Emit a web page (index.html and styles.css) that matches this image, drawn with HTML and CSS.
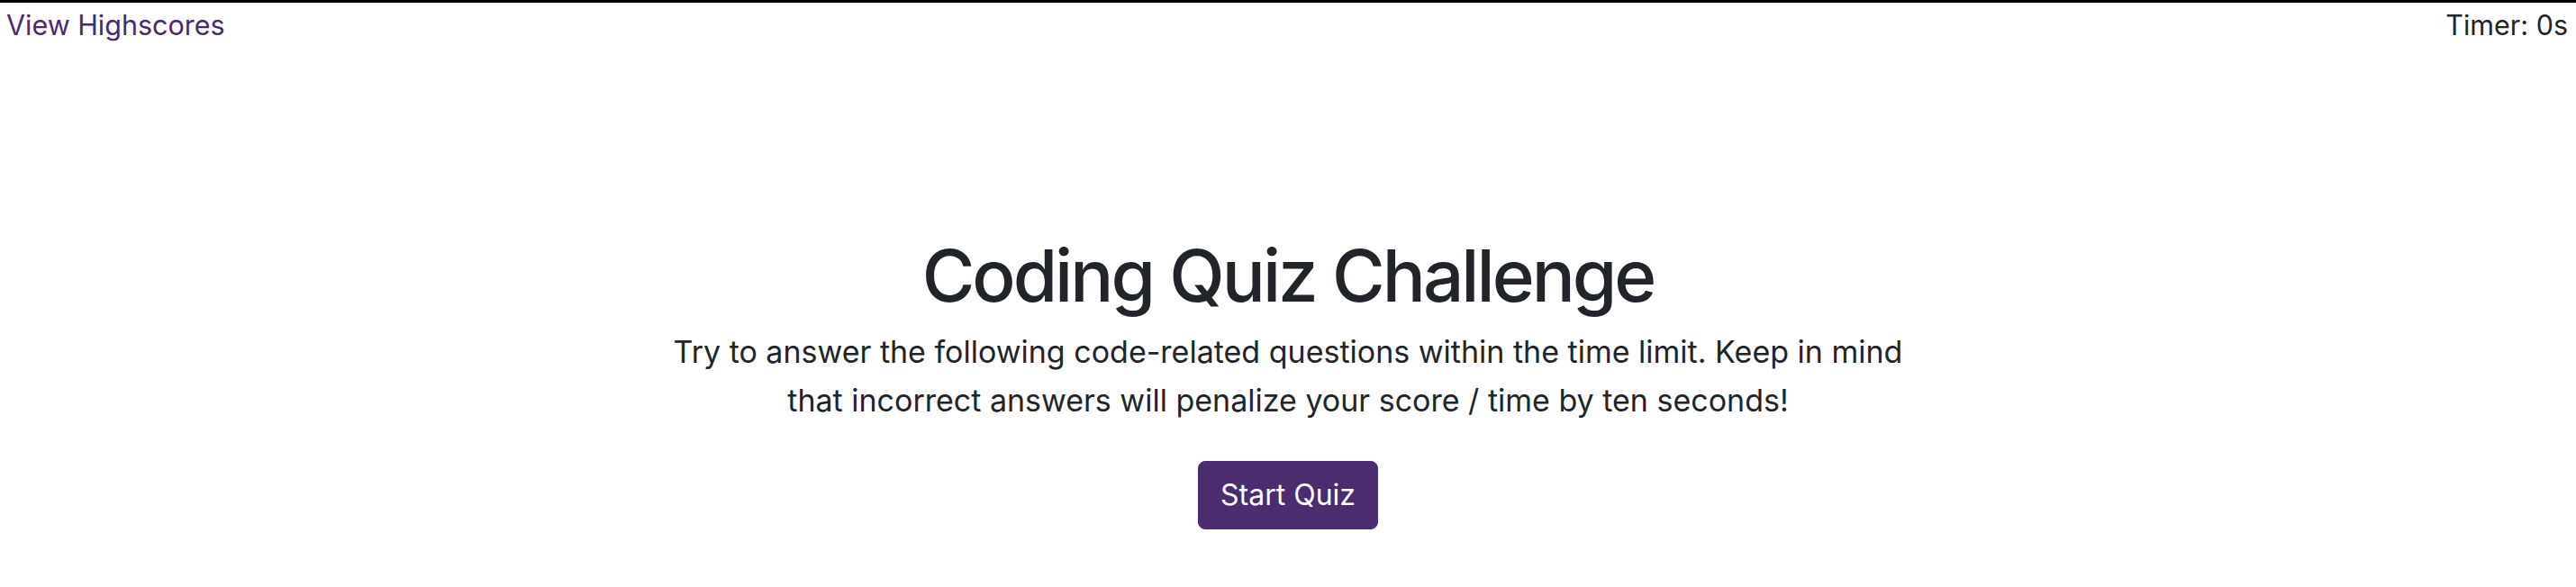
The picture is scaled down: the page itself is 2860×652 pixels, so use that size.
FILE: index.html
```html
<!DOCTYPE html>
<html lang="en">
<head>
<meta charset="utf-8">
<title>Coding Quiz Challenge</title>
<link rel="stylesheet" href="styles.css">
</head>
<body>
<header class="topbar">
  <a class="highscores-link" href="#">View Highscores</a>
  <div class="timer">Timer: <span class="timer-value">0</span>s</div>
</header>
<main class="intro">
  <h1 class="intro-title">Coding Quiz Challenge</h1>
  <p class="intro-text">Try to answer the following code-related questions within the time limit. Keep in mind that incorrect answers will penalize your score / time by ten seconds!</p>
  <button class="start-btn" type="button">Start Quiz</button>
</main>
</body>
</html>
```

FILE: styles.css
```css
html, body {
  margin: 0;
  padding: 0;
  background: #ffffff;
}

body {
  border-top: 3px solid #000000;
  font-family: Inter, "Noto Sans", "Liberation Sans", sans-serif;
  color: #212529;
}

.topbar {
  display: flex;
  justify-content: space-between;
  align-items: flex-start;
  padding: 1px 9px 0 7px;
  font-size: 30.5px;
  line-height: 48px;
}

.highscores-link {
  color: #4b2a6e;
  text-decoration: none;
}

.timer {
  color: #212529;
}

.intro {
  display: flex;
  flex-direction: column;
  align-items: center;
  text-align: center;
  margin-top: 206px;
}

.intro-title {
  margin: 0 0 10px;
  font-size: 80px;
  font-weight: 500;
  line-height: 96px;
  letter-spacing: -3px;
  color: #212529;
}

.intro-text {
  margin: 0;
  max-width: 1400px;
  font-size: 34px;
  line-height: 54px;
  color: #212529;
}

.start-btn {
  margin-top: 40px;
  font-family: inherit;
  font-size: 32px;
  line-height: 48px;
  padding: 13px 24px;
  border: 1px solid #4b2c6f;
  border-radius: 8px;
  background: #4b2c6f;
  color: #ffffff;
  cursor: pointer;
}
```
